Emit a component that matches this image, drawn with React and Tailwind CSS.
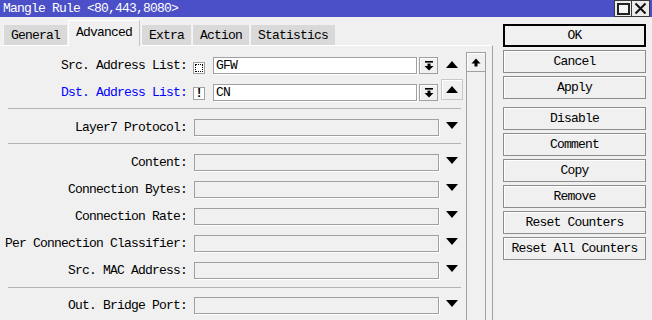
import React from "react";

const TriUp = () => (
  <svg width="12" height="7" viewBox="0 0 12 7"><polygon points="0,7 12,7 6,0" fill="#000" /></svg>
);
const TriDown = () => (
  <svg width="12" height="7" viewBox="0 0 12 7"><polygon points="0,0 12,0 6,7" fill="#000" /></svg>
);
const BarDown = () => (
  <svg width="10" height="10" viewBox="0 0 10 10">
    <rect x="1" y="0" width="8" height="1.6" fill="#000" />
    <rect x="3.5" y="2.6" width="3" height="3" fill="#000" />
    <polygon points="0.5,5 9.5,5 5,9.5" fill="#000" />
  </svg>
);
const ArrowUp = () => (
  <svg width="10" height="9" viewBox="0 0 10 9">
    <polygon points="0.5,5.5 9.5,5.5 5,0.5" fill="#000" />
    <rect x="3.5" y="5" width="3" height="3.5" fill="#000" />
  </svg>
);

function Input({ children, white, w }) {
  return (
    <div
      className={
        white
          ? "h-[17px] bg-white border border-[#a0a0a0] shadow-[1px_1px_0_#fff] pl-[2px] pt-[1px] leading-none"
          : "h-[17px] bg-[#f0f0f0] border border-[#a0a0a0] shadow-[1px_1px_0_#fff]"
      }
      style={{ width: w }}
    >
      {children}
    </div>
  );
}

function Row({ label, blue, children, mt }) {
  return (
    <div className="flex items-center h-[17px]" style={{ marginTop: mt }}>
      <div className={blue ? "w-[193px] pr-[6px] text-right text-[#0000ff] whitespace-nowrap" : "w-[193px] pr-[6px] text-right whitespace-nowrap"}>{label}</div>
      {children}
    </div>
  );
}

function DropRow({ label, mt }) {
  return (
    <Row label={label} mt={mt}>
      <div className="ml-px">
        <Input w={245} />
      </div>
      <div className="ml-[7px] mb-[5px] flex">
        <TriDown />
      </div>
    </Row>
  );
}

function Sep({ mt }) {
  return <div className="ml-[8px] w-[453px] h-px bg-[#b4b4b4]" style={{ marginTop: mt }} />;
}

function Btn({ children, primary, mt }) {
  return (
    <div
      className={
        primary
          ? "h-[23px] w-[143px] flex items-center justify-center border-2 border-black bg-[#f0f0f0] whitespace-nowrap"
          : "h-[23px] w-[143px] flex items-center justify-center border border-[#8c8c8c] shadow-[inset_1px_1px_0_#fff] bg-[#f0f0f0] whitespace-nowrap"
      }
      style={{ marginTop: mt }}
    >
      {children}
    </div>
  );
}

export default function App() {
  const tabs = ["General", "Advanced", "Extra", "Action", "Statistics"];
  return (
    <div className="w-[652px] h-[320px] overflow-hidden bg-[#f0f0f0] font-['Liberation_Mono',monospace] text-[13px] tracking-[-0.8px] leading-none text-black">
      {/* Title bar */}
      <div className="h-[17px] bg-[#4b4fc8] flex justify-between">
        <div className="text-white pl-[3px] pt-[2px] whitespace-nowrap">Mangle Rule &lt;80,443,8080&gt;</div>
        <div className="flex mr-[2px] h-[17px] border border-[#3a3a3a] bg-[#ebebeb]">
          <div className="w-[17px] flex items-center justify-center border-r border-[#3a3a3a]">
            <div className="w-[13px] h-[12px] border-2 border-[#222] bg-[#f4f4f4]" />
          </div>
          <div className="w-[17px] flex items-center justify-center">
            <svg width="13" height="13" viewBox="0 0 13 13">
              <path d="M1.5 1.5 L11.5 11.5 M11.5 1.5 L1.5 11.5" stroke="#111" strokeWidth="2" />
            </svg>
          </div>
        </div>
      </div>

      <div className="flex">
        {/* Left column */}
        <div className="w-[493px] flex flex-col">
          {/* Tabs */}
          <div className="h-[28px] flex items-end pl-[3px] gap-[1px]">
            {tabs.map((t) =>
              t === "Advanced" ? (
                <div
                  key={t}
                  className="h-[26px] -mb-px relative z-10 px-[7px] bg-[#f0f0f0] border-t border-l border-white border-r border-r-[#c4c4c4] flex items-center pb-[2px]"
                >
                  {t}
                </div>
              ) : (
                <div key={t} className="h-[20px] px-[7px] bg-[#d9d9d9] border-l border-[#f6f6f6] flex items-center">
                  {t}
                </div>
              )
            )}
          </div>

          {/* Panel */}
          <div className="h-[275px] flex border-t border-white border-r border-r-[#a0a0a0]">
            {/* Form */}
            <div className="w-[466px] flex flex-col pt-[11px]">
              <Row label="Src. Address List:">
                <div className="w-[12px] h-[12px] border border-[#a0a0a0] bg-white flex items-center justify-center mt-[4px]">
                  <div className="w-[8px] h-[8px] border border-dotted border-black" />
                </div>
                <div className="ml-[8px]">
                  <Input white w={204}>GFW</Input>
                </div>
                <div className="ml-[2px] w-[19px] h-[17px] border border-[#a0a0a0] shadow-[inset_1px_1px_0_#fff] flex items-center justify-center">
                  <BarDown />
                </div>
                <div className="ml-[8px] mb-[3px] flex">
                  <TriUp />
                </div>
              </Row>
              <Row label="Dst. Address List:" blue mt={10}>
                <div className="w-[12px] h-[13px] border border-[#a0a0a0] bg-white flex items-center justify-center mt-[2px] font-bold text-[12px] tracking-normal">
                  !
                </div>
                <div className="ml-[8px]">
                  <Input white w={204}>CN</Input>
                </div>
                <div className="ml-[2px] w-[19px] h-[17px] border border-[#a0a0a0] shadow-[inset_1px_1px_0_#fff] flex items-center justify-center">
                  <BarDown />
                </div>
                <div className="ml-[3px] mt-[-6px] w-[22px] h-[21px] border border-[#c8c8c8] shadow-[inset_1px_1px_0_#fff] flex items-center justify-center">
                  <TriUp />
                </div>
              </Row>
              <Sep mt={7} />
              <DropRow label="Layer7 Protocol:" mt={10} />
              <Sep mt={7} />
              <DropRow label="Content:" mt={10} />
              <DropRow label="Connection Bytes:" mt={10} />
              <DropRow label="Connection Rate:" mt={10} />
              <DropRow label="Per Connection Classifier:" mt={10} />
              <DropRow label="Src. MAC Address:" mt={10} />
              <Sep mt={8} />
              <DropRow label="Out. Bridge Port:" mt={9} />
            </div>

            {/* Scrollbar */}
            <div className="w-[20px] mt-[6px] flex flex-col">
              <div className="h-[20px] border border-[#a0a0a0] shadow-[inset_1px_1px_0_#fff] flex items-center justify-center">
                <ArrowUp />
              </div>
              <div className="flex-1 border-l border-r border-[#a0a0a0]" />
            </div>
          </div>
        </div>

        {/* Right buttons */}
        <div className="ml-[10px] pt-[7px] flex flex-col gap-[3px]">
          <Btn primary>OK</Btn>
          <Btn>Cancel</Btn>
          <Btn>Apply</Btn>
          <Btn mt={5}>Disable</Btn>
          <Btn>Comment</Btn>
          <Btn>Copy</Btn>
          <Btn>Remove</Btn>
          <Btn>Reset Counters</Btn>
          <Btn>Reset All Counters</Btn>
        </div>
      </div>
    </div>
  );
}
